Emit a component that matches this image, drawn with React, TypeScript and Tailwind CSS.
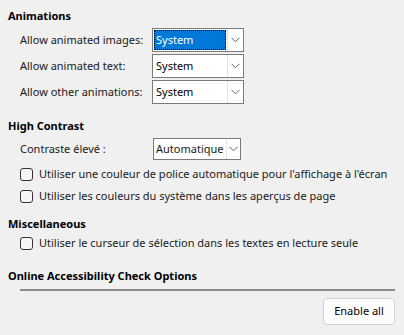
import { ReactNode } from "react";

function Chevron() {
  return (
    <svg width="9" height="6" viewBox="0 0 9 6" className="text-[#606060]">
      <path d="M0.5 0.8 L4.5 4.8 L8.5 0.8" fill="none" stroke="currentColor" strokeWidth="1" />
    </svg>
  );
}

function Combo({ value, focused, w }: { value: string; focused?: boolean; w: string }) {
  return (
    <div className={`flex h-[24px] ${w} border border-[#7a7a7a] bg-white`}>
      <div className="flex min-w-0 flex-1 p-[1px]">
        <div
          className={
            focused
              ? "flex flex-1 items-center border border-dotted border-black bg-[#0078d7] pl-[1px] text-white"
              : "flex flex-1 items-center pl-[2px] text-black"
          }
        >
          {value}
        </div>
      </div>
      <div className="flex w-[16px] items-center justify-center border-l border-[#e3e3e3]">
        <Chevron />
      </div>
    </div>
  );
}

function Heading({ children, className = "" }: { children: ReactNode; className?: string }) {
  return (
    <div className={`h-[16px] whitespace-nowrap leading-[16px] font-bold text-black ${className}`}>
      {children}
    </div>
  );
}

function Check({ label }: { label: string }) {
  return (
    <div className="flex h-[22px] items-center gap-[6px] whitespace-nowrap pl-[12px]">
      <span className="h-[13px] w-[13px] shrink-0 rounded-[3px] border border-[#333] bg-[#f6f6f6]" />
      <span>{label}</span>
    </div>
  );
}

export default function App() {
  const rows = ["Allow animated images:", "Allow animated text:", "Allow other animations:"];
  return (
    <div
      className="h-[335px] w-[404px] overflow-hidden bg-[#f0f0f0] pl-[8px] pt-[8px] text-[11px] text-[#1a1a1a]"
      style={{ fontFamily: '"Noto Sans", "Open Sans", sans-serif' }}
    >
      <Heading>Animations</Heading>
      <div className="mt-[4px] flex flex-col gap-[2px] pl-[12px]">
        {rows.map((r, i) => (
          <div key={r} className="flex items-center whitespace-nowrap">
            <span className="w-[132px]">{r}</span>
            <Combo value="System" focused={i === 0} w="w-[92px]" />
          </div>
        ))}
      </div>

      <Heading className="mt-[14px]">High Contrast</Heading>
      <div className="mt-[4px] flex items-center whitespace-nowrap pl-[12px]">
        <span className="w-[133px]">Contraste élevé :</span>
        <div className="flex h-[22px] w-[88px] border border-[#7a7a7a] bg-white">
          <div className="flex flex-1 items-center pl-[2px]">Automatique</div>
          <div className="flex w-[14px] items-center justify-center border-l border-[#e3e3e3]">
            <Chevron />
          </div>
        </div>
      </div>
      <div className="mt-[3px]">
        <Check label="Utiliser une couleur de police automatique pour l'affichage à l'écran" />
        <Check label="Utiliser les couleurs du système dans les aperçus de page" />
      </div>

      <Heading className="mt-[9px]">Miscellaneous</Heading>
      <Check label="Utiliser le curseur de sélection dans les textes en lecture seule" />

      <Heading className="mt-[14px]">Online Accessibility Check Options</Heading>
      <div className="ml-[12px] mr-[9px] mt-[5px] h-[2px] bg-[#8a8c93]" />
      <div className="mr-[9px] mt-[7px] flex justify-end">
        <button className="h-[27px] w-[72px] rounded-[4px] border border-[#d0d0d0] bg-[#fdfdfd] text-[11px] text-black">
          Enable all
        </button>
      </div>
    </div>
  );
}
